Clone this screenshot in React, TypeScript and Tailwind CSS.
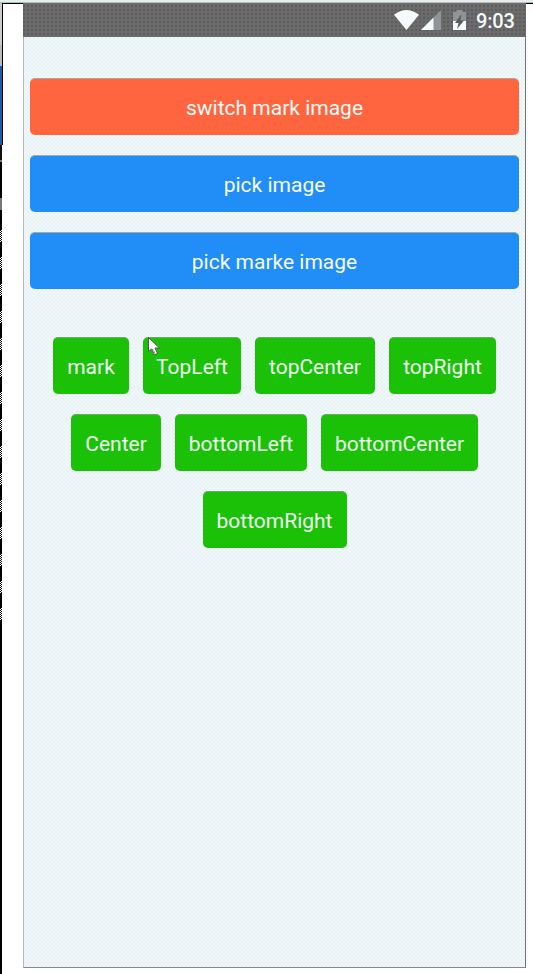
import type { ReactNode } from "react";

function ActionButton({ label, color }: { label: string; color: string }) {
  return (
    <button
      className={`flex h-[57px] w-full items-center justify-center rounded-[5px] border-t border-[#a5aaa5] pt-px text-[#f8fbfa] ${color}`}
    >
      {label}
    </button>
  );
}

function MarkButton({ label, width }: { label: string; width: string }) {
  return (
    <button
      className={`flex h-[57px] shrink-0 items-center justify-center rounded-[5px] border-t border-[#70a868] bg-[#1ac106] pt-px whitespace-nowrap text-[#f0faf3] ${width}`}
    >
      {label}
    </button>
  );
}

function Row({ children }: { children: ReactNode }) {
  return <div className="flex justify-center gap-[14px]">{children}</div>;
}

function StatusBar() {
  return (
    <div className="flex h-[34px] shrink-0 items-center bg-[#6b6b6b] bg-[conic-gradient(#5c5c5c_0_25%,transparent_0)] bg-[length:4px_4px] bg-[position:-2px_-2px] pl-[371px]">
      <svg width="80" height="34" viewBox="394 3 80 34" className="shrink-0">
        <path d="M394 14.800Q406.500 5.200 419 14.800L406.500 30Z" fill="#f5fbfc" />
        <path d="M441 10V30H421Z" fill="#8f9596" />
        <path d="M433.500 17.500V30H421Z" fill="#f5fbfc" />
        <path d="M453 12H456.500V10H462.500V12H466V30H453Z" fill="#8f9596" />
        <path d="M453 21H466V30H453Z" fill="#f5fbfc" />
        <path d="M461.500 14L455 23H458.500L457 29L464 20.500H460.500Z" fill="#5c5c5c" />
      </svg>
      <span className="ml-[2px] pt-[2px] text-[20px] leading-none font-medium tracking-[-0.2px] text-[#f5fbfc]">
        9:03
      </span>
    </div>
  );
}

function DesktopEdge() {
  return (
    <div className="flex w-[2px] shrink-0 flex-col bg-black">
      <div className="h-[42px] bg-[#c7cbcc]" />
      <div className="h-[21px] bg-[#b6babb]" />
      <div className="h-[79px] bg-[#1c5ba9]" />
      <div className="h-[15px] bg-[#101010]" />
      <div className="h-[2px] bg-[#777777]" />
      <div className="h-[36px]" />
      <div className="h-[12px] bg-[#777777]" />
      <div className="h-[20px]" />
      {Array.from({ length: 15 }, (_, index) => (
        <div
          key={index}
          className="mb-[15px] h-[12px] bg-[repeating-conic-gradient(#ffffff_0_25%,#000000_0_50%)] bg-[length:2px_2px]"
        />
      ))}
    </div>
  );
}

export default function App() {
  return (
    <div className="flex h-[974px] w-[533px] flex-col overflow-hidden bg-white font-['Roboto',sans-serif] text-[21px] leading-6">
      <div className="h-[3px] shrink-0 border-b border-[#b9bbb8] bg-[#e5edee]" />
      <div className="flex min-h-0 flex-1">
        <DesktopEdge />
        <div className="h-[142px] w-px shrink-0 bg-black" />
        <div className="w-[20px] shrink-0 border-t border-black" />
        <main className="flex h-[965px] w-[503px] shrink-0 flex-col bg-[repeating-conic-gradient(#f2f9fb_0_25%,#e8f1f4_0_50%)] bg-[length:4px_4px]">
          <StatusBar />
          <div className="flex flex-1 flex-col border-r border-b border-l border-r-[#707476] border-b-[#85898b] border-l-[#b5b9bc] pt-[41px]">
            <div className="flex flex-col gap-[20px] px-[6px]">
              <ActionButton label="switch mark image" color="bg-[#ff663f]" />
              <ActionButton label="pick image" color="bg-[#218df6]" />
              <ActionButton label="pick marke image" color="bg-[#218df6]" />
            </div>
            <div className="mt-[48px] flex flex-col gap-[20px]">
              <Row>
                <MarkButton label="mark" width="w-[76px]" />
                <MarkButton label="TopLeft" width="w-[98px]" />
                <MarkButton label="topCenter" width="w-[120px]" />
                <MarkButton label="topRight" width="w-[107px]" />
              </Row>
              <Row>
                <MarkButton label="Center" width="w-[90px]" />
                <MarkButton label="bottomLeft" width="w-[132px]" />
                <MarkButton label="bottomCenter" width="w-[157px]" />
              </Row>
              <Row>
                <MarkButton label="bottomRight" width="w-[144px]" />
              </Row>
            </div>
          </div>
        </main>
        <div className="flex-1 border-t border-black" />
      </div>
      <svg
        className="absolute top-[336px] left-[147px]"
        width="14"
        height="21"
        viewBox="0 0 14 21"
      >
        <path
          d="M1.500 1.500V15.500L4.500 13L7.500 19L10.500 17.500L8 12H12.500Z"
          fill="#ffffff"
          stroke="#555555"
          strokeWidth="1"
        />
        <path d="M5.500 13L8.500 18" stroke="#444444" strokeWidth="1" strokeDasharray="1 1" />
      </svg>
    </div>
  );
}
